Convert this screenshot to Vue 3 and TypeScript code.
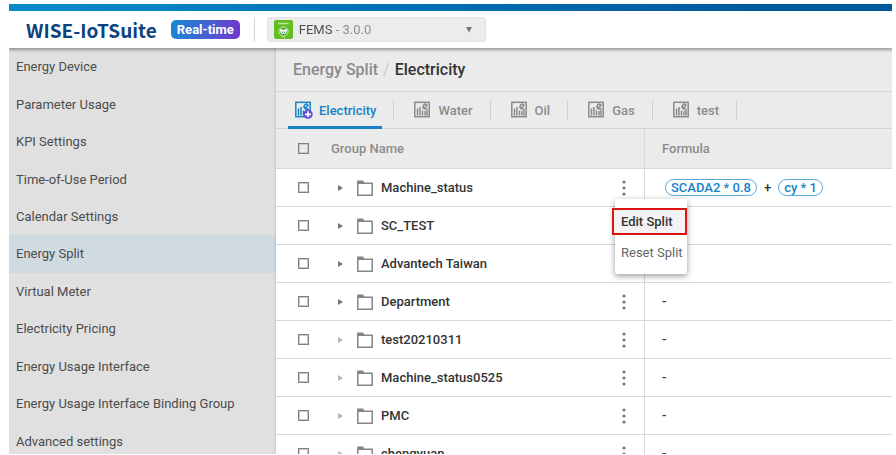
<script setup lang="ts">
import { ref } from 'vue'

interface Group {
  name: string
  hasChildren: boolean
  formula: string[]
}

const menuItems: string[] = [
  'Energy Device',
  'Parameter Usage',
  'KPI Settings',
  'Time-of-Use Period',
  'Calendar Settings',
  'Energy Split',
  'Virtual Meter',
  'Electricity Pricing',
  'Energy Usage Interface',
  'Energy Usage Interface Binding Group',
  'Advanced settings',
]
const activeItem = ref('Energy Split')

const tabs: string[] = ['Electricity', 'Water', 'Oil', 'Gas', 'test']
const activeTab = ref('Electricity')

const groups: Group[] = [
  { name: 'Machine_status', hasChildren: true, formula: ['SCADA2 * 0.8', 'cy * 1'] },
  { name: 'SC_TEST', hasChildren: true, formula: [] },
  { name: 'Advantech Taiwan', hasChildren: true, formula: [] },
  { name: 'Department', hasChildren: true, formula: [] },
  { name: 'test20210311', hasChildren: false, formula: [] },
  { name: 'Machine_status0525', hasChildren: false, formula: [] },
  { name: 'PMC', hasChildren: false, formula: [] },
  { name: 'chengyuan', hasChildren: false, formula: [] },
]
const openMenu = ref<string | null>('Machine_status')
const product = ref('fems')

function toggleMenu(name: string): void {
  openMenu.value = openMenu.value === name ? null : name
}
</script>

<template>
  <div class="page">
    <header class="topbar">
      <a class="brand" href="#">WISE-IoTSuite</a>
      <span class="badge">Real-time</span>
      <label class="product">
        <svg class="product-icon" viewBox="0 0 19 19" aria-hidden="true">
          <rect width="19" height="19" rx="2" fill="#65bd22" />
          <path d="M4 3.5h11" stroke="#d5f0bd" stroke-width="1.6" stroke-dasharray="1.6 .5" />
          <circle cx="9.5" cy="11.5" r="4.6" fill="#4cae38" stroke="#d9f3ca" stroke-width=".9" />
          <path d="M5.8 9.6c1.8-.7 2.7-.2 3.6.9 1-1.1 2-1.6 3.8-.9-.2 3-1.5 4.5-3.7 4.5S6 12.6 5.8 9.6z" fill="#fff" />
          <path d="M7.5 11.5l2 1.5 2-1.5" stroke="#399b78" fill="none" />
          <path d="M8 17.2h3" stroke="#b5e395" stroke-width=".8" />
        </svg>
        <select v-model="product" class="product-select" aria-label="Product">
          <option value="fems">FEMS - 3.0.0</option>
        </select>
        <svg class="caret" viewBox="0 0 8 6" aria-hidden="true"><path d="M1 0h6L4 5.5z" fill="#777" /></svg>
      </label>
    </header>

    <div class="body">
      <nav class="sidebar">
        <a
          v-for="item in menuItems"
          :key="item"
          href="#"
          class="nav-item"
          :class="{ active: item === activeItem }"
          @click.prevent="activeItem = item"
        >{{ item }}</a>
      </nav>

      <main class="content">
        <h1 class="crumbs">
          <a href="#" class="crumb">Energy Split</a>
          <span class="slash">/</span>
          <span>Electricity</span>
        </h1>

        <div class="tabs" role="tablist">
          <div v-for="tab in tabs" :key="tab" class="tab-slot">
            <button
              type="button"
              role="tab"
              class="tab"
              :class="{ selected: tab === activeTab }"
              :aria-selected="tab === activeTab"
              @click="activeTab = tab"
            >
              <svg class="tab-icon" viewBox="0 0 18 18" aria-hidden="true">
                <rect x=".8" y="1.3" width="14.4" height="14.4" fill="none" stroke="currentColor" stroke-width="1.5" />
                <path d="M3.5 14.5V7.5M6 14.5V6M8.5 14.5V9.5M11 14.5V10M13 14.5V8.5" stroke="currentColor" stroke-width="1.5" />
                <path d="M12.8 3.8a2.3 2.3 0 1 0 .3 3.3M9.5 7.7l4-4" fill="none" stroke="currentColor" stroke-width="1.5" />
                <g v-if="tab === activeTab">
                  <circle cx="13" cy="13.3" r="4.7" fill="#5c4bd3" />
                  <path d="M13 10.3v6M10 13.3h6" stroke="#fff" stroke-width="1.7" />
                </g>
              </svg>
              {{ tab }}
            </button>
          </div>
        </div>

        <table class="grid">
          <colgroup>
            <col class="col-check" />
            <col class="col-name" />
            <col />
          </colgroup>
          <thead>
            <tr>
              <th><input type="checkbox" class="check" aria-label="Select all groups" /></th>
              <th>Group Name</th>
              <th class="formula">Formula</th>
            </tr>
          </thead>
          <tbody>
            <tr v-for="group in groups" :key="group.name">
              <td><input type="checkbox" class="check" :aria-label="group.name" /></td>
              <td>
                <div class="name-cell">
                  <button type="button" class="expand" :class="{ dim: !group.hasChildren }" aria-label="Expand">
                    <svg viewBox="0 0 5 6" width="5" height="6"><path d="M0 0l5 3-5 3z" fill="currentColor" /></svg>
                  </button>
                  <svg class="folder" viewBox="0 0 16 16" aria-hidden="true">
                    <path d="M.8 3.2h14.4v12H.8z" fill="none" stroke="#858585" stroke-width="1.5" />
                    <path d="M.1.6h6l1.5 2.6H.1z" fill="#858585" />
                  </svg>
                  <span class="name">{{ group.name }}</span>
                  <div class="actions">
                    <button type="button" class="more" aria-label="More actions" @click="toggleMenu(group.name)">
                      <svg viewBox="0 0 4 16" width="4" height="16">
                        <g fill="#777">
                          <circle cx="2" cy="2" r="1.6" />
                          <circle cx="2" cy="8" r="1.6" />
                          <circle cx="2" cy="14" r="1.6" />
                        </g>
                      </svg>
                    </button>
                    <div v-if="openMenu === group.name" class="popup" role="menu">
                      <button type="button" role="menuitem" class="popup-item current">Edit Split</button>
                      <button type="button" role="menuitem" class="popup-item">Reset Split</button>
                    </div>
                  </div>
                </div>
              </td>
              <td class="formula">
                <div v-if="group.formula.length" class="terms">
                  <template v-for="(term, i) in group.formula" :key="term">
                    <span v-if="i > 0" class="plus">+</span>
                    <span class="term">{{ term }}</span>
                  </template>
                </div>
                <template v-else>-</template>
              </td>
            </tr>
          </tbody>
        </table>
      </main>
    </div>
  </div>
</template>

<style>
body {
  margin: 0;
  background: #fff;
}
</style>

<style scoped>
.page {
  box-sizing: border-box;
  height: 100vh;
  padding: 4px 4px 1px 9px;
  display: flex;
  flex-direction: column;
  overflow: hidden;
  font-family: Roboto, "Liberation Sans", sans-serif;
  font-size: 13px;
  color: #333;
}

button {
  border: 0;
  padding: 0;
  background: none;
  font: inherit;
  color: inherit;
}

a {
  color: inherit;
  text-decoration: none;
}

.topbar {
  position: relative;
  z-index: 1;
  flex: none;
  display: flex;
  align-items: center;
  height: 37px;
  padding-left: 17px;
  background: #fff;
  border-top: 7px solid;
  border-image: linear-gradient(90deg, #078bcc, #0072b9 40%, #005a9d 85%) 1;
  border-bottom: 0;
  box-shadow: 0 1px 3px 1px rgba(0, 0, 0, 0.35);
  clip-path: inset(0 0 -6px 0);
}

.brand {
  font-family: "Noto Sans CJK SC", "Noto Sans", sans-serif;
  font-size: 19px;
  font-weight: 700;
  line-height: 30px;
  color: #0c437d;
}

.badge {
  margin-left: 14px;
  padding: 0 6px;
  border-radius: 5px;
  background: linear-gradient(100deg, #1689d2, #4263d2 50%, #7435cf);
  color: #fff;
  font-weight: 700;
  line-height: 19px;
}

.product {
  display: flex;
  align-items: center;
  box-sizing: border-box;
  width: 219px;
  height: 25px;
  margin-left: 27px;
  padding: 0 12px 0 6px;
  position: relative;
  border: 1px solid #e2e2e2;
  border-radius: 3px;
  background: #ececec;
}

.product::before {
  content: "";
  position: absolute;
  left: -14px;
  top: -1px;
  bottom: -1px;
  border-left: 1px solid #d5d5d5;
}

.product-icon {
  width: 19px;
  height: 19px;
}

.product-select {
  flex: 1;
  appearance: none;
  margin-left: 6px;
  padding: 0;
  border: 0;
  font: inherit;
  line-height: 20px;
  background: linear-gradient(90deg, #4a4a4a 35px, #8a8a8a 35px);
  background-clip: text;
  color: transparent;
}

.product-select option {
  color: #333;
}

.caret {
  width: 8px;
  height: 6px;
}

.body {
  flex: 1;
  display: flex;
  min-height: 0;
  overflow: hidden;
}

.sidebar {
  flex: none;
  display: flex;
  flex-direction: column;
  width: 267px;
  min-height: 412px;
  background: #e0e0e0;
}

.nav-item {
  flex: 1;
  display: flex;
  align-items: center;
  padding-left: 7px;
  color: #4c4c4c;
}

.nav-item.active {
  background: #cfdae1;
}

.content {
  flex: 1;
  min-width: 0;
  background: #fff;
  box-shadow: 0 0 3px rgba(0, 0, 0, 0.2);
}

.crumbs {
  display: flex;
  align-items: center;
  gap: 5px;
  height: 43px;
  margin: 0;
  padding-left: 17px;
  border-bottom: 1px solid #d4d4d4;
  background: #ebebeb;
  font-size: 16px;
  font-weight: 500;
}

.crumb {
  color: #8b8b8b;
}

.slash {
  color: #c9c9c9;
  font-weight: 400;
}

.tabs {
  display: flex;
  height: 36px;
  padding-left: 12px;
  border-bottom: 1px solid #d4d4d4;
  background: #ebebeb;
}

.tab-slot {
  display: flex;
  align-items: center;
  padding-right: 12px;
  margin-right: 13px;
  background: linear-gradient(#d0d0d0, #d0d0d0) right center / 1px 20px no-repeat;
}

.tab {
  display: flex;
  align-items: center;
  gap: 6px;
  box-sizing: border-box;
  height: 37px;
  padding: 3px 6px 0 7px;
  border-bottom: 3px solid transparent;
  color: #8b8b8b;
  font-weight: 500;
}

.tab.selected {
  border-bottom-color: #1683c7;
  color: #1683c7;
}

.tab-icon {
  width: 18px;
  height: 18px;
}

.grid {
  width: 100%;
  table-layout: fixed;
  border-collapse: separate;
  border-spacing: 0;
}

.col-check {
  width: 55px;
}

.col-name {
  width: 313px;
}

th,
td {
  box-sizing: border-box;
  height: 38px;
  padding: 0;
  border-bottom: 1px solid #d8d8d8;
  text-align: left;
  font-weight: 500;
}

th {
  height: 40px;
  background: #ebebeb;
  color: #8b8b8b;
}

.formula {
  padding-left: 17px;
  border-left: 1px solid #d8d8d8;
}

.check {
  display: block;
  appearance: none;
  box-sizing: border-box;
  width: 11px;
  height: 11px;
  margin: 0 0 0 22px;
  border: 1px solid #808080;
  box-shadow: inset 0 0 0 1px #c8c8c8;
}

.name-cell {
  display: flex;
  align-items: center;
  padding: 0 17px 0 7px;
}

.expand {
  display: flex;
  width: 19px;
  color: #777;
}

.expand.dim {
  color: #b5b5b5;
}

.folder {
  width: 16px;
  height: 16px;
}

.name {
  flex: 1;
  margin-left: 8px;
}

.actions {
  position: relative;
}

.more {
  display: flex;
  padding: 2px 1px;
}

.popup {
  position: absolute;
  z-index: 2;
  top: 21px;
  left: -6px;
  display: flex;
  flex-direction: column;
  gap: 6px;
  box-sizing: border-box;
  width: 72px;
  height: 75px;
  padding-top: 10px;
  border-radius: 2px;
  background: #fff;
  box-shadow: 0 2px 6px rgba(0, 0, 0, 0.4);
}

.popup-item {
  height: 25px;
  padding-left: 6px;
  text-align: left;
  white-space: nowrap;
  font-weight: 400;
  color: #666;
}

.popup-item.current {
  margin: 0 1px 0 -2px;
  padding-left: 8px;
  background: #f3f3f3;
  outline: 2px solid #dc1414;
  outline-offset: -1px;
  font-weight: 500;
  color: #333;
}

.terms {
  display: flex;
  align-items: center;
  gap: 7px;
  padding-left: 3px;
}

.term {
  padding: 0 5px;
  border: 1px solid #5aa9d9;
  border-radius: 9px;
  line-height: 15px;
  color: #1683c7;
}
</style>
